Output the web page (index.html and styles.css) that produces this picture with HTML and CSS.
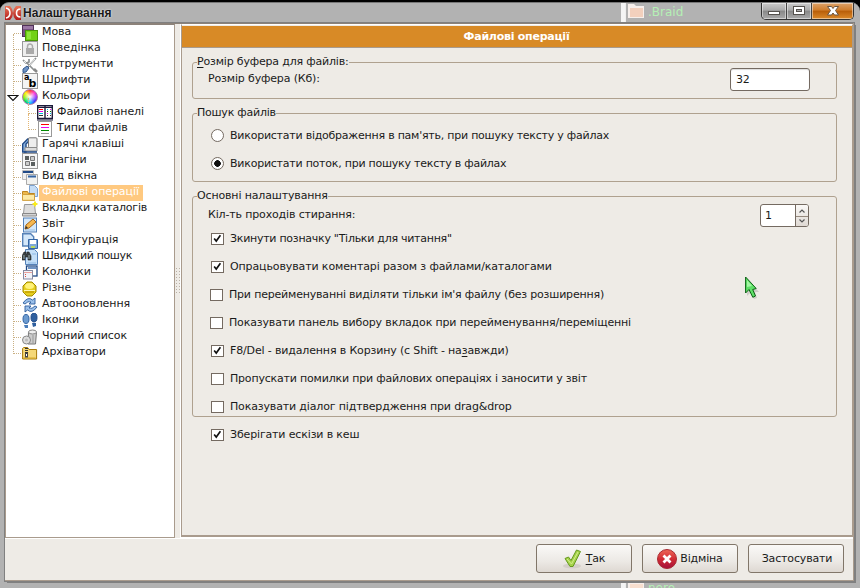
FILE: index.html
```html
<!DOCTYPE html>
<html lang="uk">
<head>
<meta charset="utf-8">
<title>Налаштування</title>
<link rel="stylesheet" href="styles.css">
</head>
<body>
<div class="backdrop top"><i class="bar"></i><svg class="folder" width="16" height="14" viewBox="0 0 16 14"><path d="M0 0h6l2 2h8v12H0z" fill="#f7efeb"/><path d="M2 4h13v9H2z" fill="#f3d0bd"/></svg><span>.Braid</span></div>
<div class="backdrop bottom"><i class="bar"></i><svg class="folder" width="16" height="14" viewBox="0 0 16 14"><path d="M0 0h12v2h4v12H0z" fill="#f7efeb"/><path d="M2 3h13v10H2z" fill="#f8dfcf"/></svg><span>nero</span></div>
<div class="window">
  <header class="titlebar">
    <svg width="16" height="16" viewBox="0 0 16 16"><defs><linearGradient id="logo" x2="0" y2="1"><stop stop-color="#ea7458"/><stop offset="1" stop-color="#b01c1c"/></linearGradient></defs><path d="M0 1h5q3 3 3 7t-3 7H0z" fill="url(#logo)"/><path d="M16 1h-5Q8 4 8 8t3 7h5z" fill="url(#logo)"/><path d="M1 3q4 1 4 5t-4 5M15.500 4q-4 0-4 4t4 4" fill="none" stroke="#fff" stroke-width="1.600"/></svg>
    <h1>Налаштування</h1>
    <div class="controls">
      <span><svg width="24" height="15" viewBox="0 0 24 15"><rect x="6.500" y="8.500" width="11" height="3" fill="#fff" stroke="#55514d"/></svg></span>
      <span><svg width="24" height="15" viewBox="0 0 24 15"><rect x="6.500" y="3.500" width="11" height="8" fill="#fff" stroke="#55514d"/><rect x="9.500" y="6.500" width="5" height="2" fill="#aaa" stroke="#55514d"/></svg></span>
      <span class="close"><svg width="41" height="15" viewBox="0 0 41 15"><path d="M15.500 3.500h4l1.500 2 1.500-2h4l-3 4 3 4.500h-4L21 10l-1.500 2h-4l3-4.500z" fill="#fff" stroke="#6b5540"/></svg></span>
    </div>
  </header>
  <div class="client">
    <main class="content">
      <nav class="tree">
        <ul>
          <li><svg viewBox="0 0 16 16"><rect x=".5" y=".5" width="11" height="11" fill="#775083" stroke="#503258"/><path d="M1 1h10v3H1z" fill="#9b78a4"/><rect x="3.500" y="5.500" width="12" height="10" fill="#73d216" stroke="#4a9607"/><path d="M5 7h4v7H5z" fill="#8fe43a"/></svg><b>Мова</b></li>
          <li><svg viewBox="0 0 16 16"><rect x=".5" y=".5" width="15" height="15" fill="#eee" stroke="#999"/><path d="M5.500 8V5.500a2.500 2.500 0 0 1 5 0V8" fill="none" stroke="#aaa" stroke-width="1.500"/><rect x="4" y="7" width="8" height="6" fill="#aaa"/></svg><b>Поведінка</b></li>
          <li><svg viewBox="0 0 16 16"><path d="M1 3l3 3 3-1v-3M5 6l8 8M14 1L6 10" fill="none" stroke="#8b8f90" stroke-width="1.700"/><path d="M2 4l2 2M13 2L7 9" stroke="#eee"/><path d="M12 12l3 3" stroke="#888" stroke-width="2.500"/><path d="M5 9l2 2-3 4-3 .5V12z" fill="#6f93c4" stroke="#31588e"/></svg><b>Інструменти</b></li>
          <li><svg viewBox="0 0 16 16"><rect x=".5" y=".5" width="15" height="15" fill="#f4f4f4" stroke="#999"/><text x="2" y="7" class="glyph-a">a</text><text x="6.500" y="14" class="glyph-b">b</text></svg><b>Шрифти</b></li>
          <li class="open"><i class="wheel"></i><svg class="expander" viewBox="0 0 12 8"><path d="M1 1.500h10L6 6.500z" fill="#fff" stroke="#111" stroke-width="1.200"/></svg><b>Кольори</b></li>
          <li class="sub"><svg viewBox="0 0 16 16"><path d="M.7.700h14.600v12.800H.7z" fill="#fff" stroke="#1c1a3a" stroke-width="1.400"/><path d="M7.500 0v14M8.500 0v14" stroke="#1c1a3a" stroke-width=".7"/><path d="M0 2.500h16" stroke="#1c1a3a"/><path d="M0 15h16" stroke="#1c1a3a"/><path d="M2 4.500h4" stroke="#f00"/><path d="M2 6.500h4M10 8.500h1M13 4.500h1" stroke="#e0e"/><path d="M2 8.500h4M10 4.500h1M13 8.500h1" stroke="#0bd"/><path d="M2 10.500h4M10 10.500h1M13 10.500h1" stroke="#333"/><path d="M10 6.500h1M13 6.500h1" stroke="#070"/></svg><b>Файлові панелі</b></li>
          <li class="sub"><svg viewBox="0 0 16 16"><rect x="1.500" y=".5" width="13" height="15" fill="#fff" stroke="#999"/><path d="M4 3.500h8" stroke="#f00"/><path d="M4 6.500h8" stroke="#e0e"/><path d="M4 9.500h8" stroke="#080"/><path d="M4 12.500h8" stroke="#999"/></svg><b>Типи файлів</b></li>
          <li><svg viewBox="0 0 16 16"><path d="M.7 15V7l5-5H7v2L4 7v8z" fill="#8db4e0" stroke="#204a87" stroke-width="1.400"/><rect x="6.500" y=".8" width="8.500" height="10" rx="1" fill="#eee" stroke="#777"/><path d="M3 10.500h12v3.500H3z" fill="#ddd" stroke="#8b8b8b"/><path d="M2 15h13" stroke="#204a87" stroke-width="1.500"/></svg><b>Гарячі клавіші</b></li>
          <li><svg viewBox="0 0 16 16"><rect x=".5" y=".5" width="15" height="15" fill="#f7f7f7" stroke="#999"/><path d="M3 3h4v4H3zM9 9h4v4H9z" fill="#5b6060"/><path d="M8.500 3.500h4v4h-4zM3.500 8.500h4v4h-4z" fill="#ccc" stroke="#777"/></svg><b>Плагіни</b></li>
          <li><svg viewBox="0 0 16 16"><path d="M.5 1.500h11v9H.5z" fill="#eee" stroke="#bbb"/><path d="M1 3h10" stroke="#204a87" stroke-width="2"/><path d="M4.500 5.500h11v10h-11z" fill="#f2f2f0" stroke="#aaa"/><path d="M6 7.500h8" stroke="#3465a4" stroke-width="2"/></svg><b>Вид вікна</b></li>
          <li class="selected"><svg viewBox="0 0 16 16"><path d="M7.500.500h5l3 3v8h-8z" fill="#c6ddf5" stroke="#7ca2d0"/><path d="M.5 15V6.500h5l1 2h6V15z" fill="#edb84c" stroke="#bd8520"/><path d="M.5 15.300V9.500h12v5.800z" fill="#fce9a6" stroke="#d2a03c"/></svg><b>Файлові операції</b></li>
          <li class="tight"><svg viewBox="0 0 16 16"><path d="M2.500 3.500h10l1 9H1.500z" fill="#ddd" stroke="#999"/><path d="M.5 12.500h14v2.500H.5z" fill="#d4d4d4" stroke="#888"/><path d="M13 .5l.8 1.700 1.700.8-1.700.8-.8 1.700-.8-1.700-1.700-.8 1.700-.8z" fill="#fff200" stroke="#f6e82a"/></svg><b>Вкладки каталогів</b></li>
          <li><svg viewBox="0 0 16 16"><rect x="1.500" y="1" width="13" height="14" fill="#d4e8fa" stroke="#5682b8"/><path d="M3 13h10" stroke="#9ac0e6"/><path d="M3 12l1-4 7-6 3 3-7 6z" fill="#f6b850" stroke="#a86614"/><path d="M3 12l1-3 2 2z" fill="#333"/></svg><b>Звіт</b></li>
          <li><svg viewBox="0 0 16 16"><path d="M.7.700h8l3 3V13H.7z" fill="#d4e8fa" stroke="#5682b8" stroke-width="1.400"/><path d="M6.500 6.500h9v9h-9z" fill="#7fa8d8" stroke="#3465a4"/><path d="M8 7h6v4H8z" fill="#fff"/><path d="M9 13h4v2H9z" fill="#b8d860"/></svg><b>Конфігурація</b></li>
          <li class="tighter"><svg viewBox="0 0 16 16"><path d="M3.500.500h9l3 3v12h-12z" fill="#c4dff8" stroke="#5682b8"/><path d="M6 14h8M10 5h4" stroke="#8fb9e5"/><path d="M2 3h2v2h1V3h2l2 4v4H6V8H3v3H0V7z" fill="#394042" stroke="#222" stroke-width=".6"/><path d="M2 6v4M7 6v4" stroke="#9aa"/></svg><b>Швидкий пошук</b></li>
          <li><svg viewBox="0 0 16 16"><rect x="4.500" y="1" width="10.500" height="10" fill="#fff" stroke="#204a87" stroke-width="1.300"/><path d="M6 3h8" stroke="#6f93c4" stroke-width="2"/><rect x="1.500" y="5.500" width="9" height="8.500" fill="#f1f4fa" stroke="#888aa0"/><path d="M2.500 7.500h7" stroke="#e05040" stroke-dasharray="1 1"/><path d="M3.500 9v4" stroke="#e05040" stroke-dasharray="1 1"/></svg><b>Колонки</b></li>
          <li><svg viewBox="0 0 16 16"><path d="M5 1h5l4 4v6l-4 4H5l-4-4V5z" fill="#e6cf20" stroke="#a28a00"/><ellipse cx="7.500" cy="5" rx="4.500" ry="3" fill="#fff27a"/><path d="M2 9.500h11" stroke="#fff9b0"/><path d="M3 11h9" stroke="#c4a000" stroke-width="1.500"/></svg><b>Різне</b></li>
          <li><svg viewBox="0 0 16 16"><path d="M1 6q5-7 9.500-3L13 1v6H7l2-2Q6 3.500 3 7zM15 10q-5 7-9.500 3L3 15V9h6l-2 2q3 1.500 6-2z" fill="#9bc0ea" stroke="#2d5c9c" stroke-width=".9"/></svg><b>Автооновлення</b></li>
          <li><svg viewBox="0 0 16 16"><ellipse cx="4" cy="6" rx="3" ry="4.500" fill="#6c9bd0" stroke="#3465a4"/><path d="M2 12h4v3H3z" fill="#4b7dba"/><ellipse cx="12" cy="4.500" rx="3" ry="4.500" fill="#2e5f9f" stroke="#204a87"/><path d="M10 10h4v3l-3 1z" fill="#2e5f9f"/></svg><b>Іконки</b></li>
          <li><svg viewBox="0 0 16 16"><path d="M6.500 3h8l-1 12H6z" fill="#ccc" stroke="#777"/><ellipse cx="10.500" cy="3" rx="4" ry="2" fill="#eee" stroke="#888"/><path d="M11 6v8" stroke="#999"/><circle cx="4.500" cy="11" r="4" fill="#ddd" stroke="#888"/><circle cx="4.500" cy="11" r="1.500" fill="#bbb"/></svg><b>Чорний список</b></li>
          <li><svg viewBox="0 0 16 16"><path d="M.6 14V3.500l1-1h4l1.500 2h7.500V14z" fill="#f5d878" stroke="#a77a0a"/><path d="M1.500 13h12" stroke="#d6a927"/><path d="M4.500 3v6" stroke="#333" stroke-width="3" stroke-dasharray="1 1"/><rect x="3.500" y="8.500" width="2" height="3.500" fill="#fff" stroke="#444"/></svg><b>Архіватори</b></li>
        </ul>
      </nav>
      <div class="splitter"><i></i></div>
      <section class="panel">
        <h2>Файлові операції</h2>
        <form>
          <fieldset class="buffer">
            <legend><u>Р</u>озмір буфера для файлів:</legend>
            <label>Розмір буфера (Кб):</label>
            <span class="field">32</span>
          </fieldset>
          <fieldset class="search">
            <legend>Пошук файлів</legend>
            <label class="row"><i class="radio"></i>Використати відображення в пам'ять, при пошуку тексту у файлах</label>
            <label class="row"><i class="radio on"></i>Використати поток, при пошуку тексту в файлах</label>
          </fieldset>
          <fieldset class="general">
            <legend>Основні налаштування</legend>
            <div class="wipe"><label>Кіл-ть проходів стирання:</label>
              <span class="spin"><span>1</span><svg width="12" height="22" viewBox="0 0 12 22"><path d="M0 11.500h12" stroke="#968a7e"/><path d="M3.500 7.500L6 5l2.500 2.500M3.500 14.500L6 17l2.500-2.500" fill="none" stroke="#555" stroke-width="1.200"/></svg></span>
            </div>
            <label class="row readonly"><svg class="box"><use href="#tick"/></svg>Зкинути позначку "Тільки для читання"</label>
            <label class="row comments"><svg class="box"><use href="#tick"/></svg>Опрацьовувати коментарі разом з файлами/каталогами</label>
            <label class="row rename shifted"><svg class="box"></svg>При перейменуванні виділяти тільки ім'я файлу (без розширення)</label>
            <label class="row shifted"><svg class="box"></svg>Показувати панель вибору вкладок при перейменування/переміщенні</label>
            <label class="row"><svg class="box"><use href="#tick"/></svg><span>F8/Del - видалення в Корзину (с Shift - на<u>з</u>авжди)</span></label>
            <label class="row skip"><svg class="box"></svg>Пропускати помилки при файлових операціях і заносити у звіт</label>
            <label class="row"><svg class="box"></svg>Показувати діалог підтвердження при drag&amp;drop</label>
          </fieldset>
          <label class="row cache"><svg class="box"><use href="#tick"/></svg>Зберігати ескізи в кеш</label>
        </form>
      </section>
    </main>
    <footer>
      <button><svg width="20" height="20" viewBox="0 0 20 20"><ellipse cx="9" cy="17" rx="9" ry="2.500" fill="#d4cec9"/><path d="M2 9.500l3.500-1.500 2.500 3.500L13.500 1l4 1.500L10 17.500H7z" fill="#a5d24a" stroke="#669a20" stroke-linejoin="round"/><path d="M4 10l4.500 5L15 3" fill="none" stroke="#d2ee8a"/></svg><span><u>Т</u>ак</span></button>
      <button class="cancel"><svg width="20" height="20" viewBox="0 0 20 20"><defs><linearGradient id="red" x2="0" y2="1"><stop stop-color="#ee6a5a"/><stop offset=".5" stop-color="#d22c34"/><stop offset="1" stop-color="#a3103c"/></linearGradient></defs><circle cx="10" cy="10" r="9.500" fill="url(#red)" stroke="#a82a32"/><path d="M6.500 6.500l7 7M13.500 6.500l-7 7" stroke="#fff" stroke-width="2.800"/></svg><span>Відміна</span></button>
      <button class="apply">Застосувати</button>
    </footer>
  </div>
</div>
<svg class="pointer" width="16" height="25" viewBox="0 0 16 25"><path d="M2 2v18l4-4 3 7 3-1-2-6h4z" fill="#0002"/><path d="M.6 1v16l3.400-3.500 3.800 7.800 2.700-1.300-2.800-6.500 3.500-1z" fill="#5fe068" stroke="#0b6114"/><path d="M2 4v7l5-1z" fill="#a5f5a5"/></svg>
<svg class="defs"><symbol id="tick" viewBox="0 0 12 12"><path d="M2 5.500L4.500 8.500 9.500 1.500" fill="none" stroke="#111" stroke-width="2"/></symbol></svg>
</body>
</html>
```
FILE: styles.css
```css
* { box-sizing: border-box; }
body {
  margin: 0; width: 860px; height: 588px; overflow: hidden; position: relative;
  background: #000;
  font: 11px/13px "DejaVu Sans", sans-serif; color: #1a1a1a;
}
body::before { content: ""; position: absolute; inset: 2px 0 0; border-radius: 9px 9px 0 0; border-top: 1px solid #777; background: #b2b2b2; }
.backdrop { position: absolute; left: 621px; width: 100px; display: flex; font-size: 12px; color: #b5f0b5; overflow: hidden; }
.backdrop.top { top: 3px; height: 20px; line-height: 18px; }
.backdrop.bottom { top: 581px; height: 7px; line-height: 14px; }
.backdrop .bar { width: 5px; margin-right: 2px; border-left: 4px solid #f4f4f4; border-right: 1px solid #eee; background: #bbb; }
.backdrop .folder { margin-top: 1px; margin-right: 4px; flex: none; }
.backdrop.bottom .folder { margin-top: 0; }
.window { position: relative; width: 860px; height: 588px; padding: 3px 5px 0; display: flex; flex-direction: column; }
.titlebar { height: 20px; display: flex; align-items: center; }
h1 { margin: 0 0 0 2px; font: bold 12px/18px "Liberation Sans", sans-serif; letter-spacing: .05px; text-shadow: 0 0 2px #fff; flex: 1; }
.controls { align-self: flex-start; display: flex; width: 93px; height: 17px; border: 1px solid #333; border-top: 0; border-radius: 0 0 5px 5px; overflow: hidden; margin-right: 1px; }
.controls span { width: 25px; background: linear-gradient(#ccc, #aaa 45%, #888 50%, #aaa); border-right: 1px solid #444; box-shadow: inset 0 0 0 1px #fff7; }
.controls svg { display: block; }
.controls .close { width: 42px; border: 0; background: linear-gradient(#dda36a, #cf7c2b 45%, #b85d08 50%, #dc8a2a); }
.client { width: 849px; height: 558px; background: #eeebe6; outline: 1px solid #808080; border-bottom: 1px solid #a99b8d; border-right: 1px solid #a99b8d; box-shadow: 2px 2px 0 #808080; display: flex; flex-direction: column; }
.content { display: flex; height: 515px; border-top: 1px solid #8c8279; flex: none; }
.tree { width: 170px; height: 514px; border: 1px solid #a99b8d; border-top-color: #8c8279; background: #fff; flex: none; letter-spacing: -.08px; }
ul { list-style: none; margin: 0; padding: 0; position: relative; }
ul::before { content: ""; position: absolute; left: 7px; top: 9px; height: 320px; border-left: 1px dotted #c9b083; }
li { height: 16px; display: flex; position: relative; padding-left: 16px; }
li::before { content: ""; position: absolute; left: 8px; top: 8px; width: 7px; border-top: 1px dotted #c9b083; }
li > svg, .wheel { width: 16px; height: 16px; flex: none; }
li b { font-weight: normal; padding: 0 4px 0 3px; margin-left: 1px; }
.tight { letter-spacing: -.2px; }
.tighter { letter-spacing: -.35px; }
.sub { padding-left: 31px; }
.sub::before { left: 23px; }
.sub::after { content: ""; position: absolute; left: 22px; top: -7px; height: 16px; border-left: 1px dotted #e5b773; }
.open::before { display: none; }
.wheel { border-radius: 50%; border: 1px solid #a7a; background: radial-gradient(#fff, #fff0 65%), conic-gradient(#f33, #f3c, #93f, #33f, #0cf, #0d5, #9e0, #fe0, #f33); }
li > .expander { position: absolute; left: 1px; top: 5px; width: 12px; height: 8px; background: #fff; }
.selected b { background: #ffc980; color: #fff; }
.glyph-a { font: bold 8px "DejaVu Sans", sans-serif; }
.glyph-b { font: bold 11px "DejaVu Sans", sans-serif; }
.splitter { width: 6px; display: flex; align-items: center; justify-content: center; border-right: 1px solid #fff; }
.splitter i { width: 5px; height: 28px; background: radial-gradient(circle, #b9b0a5 .7px, #fff0 1px) 0 0 / 3px 3px; }
.panel { width: 672px; height: 513px; border: 1px solid #a99b8d; border-width: 1px 1px 2px; border-top-color: #fff; box-shadow: 0 1px #fff; }
h2 { margin: 1px 0 0; padding-right: 1px; height: 22px; background: #d88a26; color: #fff; text-align: center; font: bold 11px/21px "DejaVu Sans", sans-serif; letter-spacing: -.25px; border-bottom: 1px solid #a99b8d; }
form { padding: 8px 15px 0 10px; letter-spacing: -.15px; }
fieldset { margin: 0 0 8px; padding: 0; min-width: 0; border: 1px solid #afa18f; border-radius: 3px; }
legend { margin-left: 4px; padding: 0; height: 12px; line-height: 12px; }
u { text-underline-offset: 2px; }
.buffer { height: 43px; display: flex; padding-left: 15px; padding-right: 26px; }
.buffer legend { margin-left: -11px; letter-spacing: -.18px; }
.buffer label { flex: 1; padding-top: 4px; }
.field { width: 80px; height: 23px; border: 1px solid #746a61; border-radius: 3px; background: #fff; padding: 4px 5px; box-shadow: inset 0 1px 1px #ddd; }
.search { height: 75px; letter-spacing: -.235px; }
.search legend + .row { margin-top: 2px; }
.general { height: 227px; margin-bottom: 0; }
.wipe { height: 22px; display: flex; justify-content: space-between; padding: 6px 27px 0 15px; }
.spin { height: 23px; width: 49px; display: flex; border: 1px solid #746a61; border-radius: 3px; background: #fff; overflow: hidden; flex: none; margin-top: -4px; }
.spin span { flex: 1; padding: 4px 4px; border-right: 1px solid #746a61; }
.spin svg { background: linear-gradient(#faf9f7, #ded8d2); flex: none; }
.row { display: flex; align-items: center; height: 28px; padding-left: 18px; white-space: pre; }
.shifted { padding-left: 17px; }
.readonly { letter-spacing: -.27px; }
.comments { letter-spacing: -.12px; }
.rename, .skip { letter-spacing: -.19px; }
.cache { padding-left: 19px; height: 34px; }
.box { width: 13px; height: 12px; border: 1px solid #746a61; background: #fff; margin: 1px 6px 0 0; flex: none; }
.radio { width: 13px; height: 13px; border: 1px solid #746a61; border-radius: 50%; background: #fff; margin: 1px 6px 0 0; flex: none; }
.radio.on { background: radial-gradient(circle, #111 0 3px, #fff 3.600px); }
footer { height: 42px; border-top: 1px solid #fff; padding: 5px 9px 0; display: flex; justify-content: flex-end; gap: 10px; }
button { width: 96px; height: 29px; padding: 0; border: 1px solid #817669; border-radius: 3px; background: linear-gradient(#faf9f7, #ece9e5 60%, #ded8d2); font: inherit; color: inherit; letter-spacing: -.15px; display: flex; align-items: center; justify-content: center; gap: 3px; }
.apply { padding-left: 2px; }
.pointer { position: absolute; left: 745px; top: 276px; }
.defs { position: absolute; width: 0; height: 0; }
```
